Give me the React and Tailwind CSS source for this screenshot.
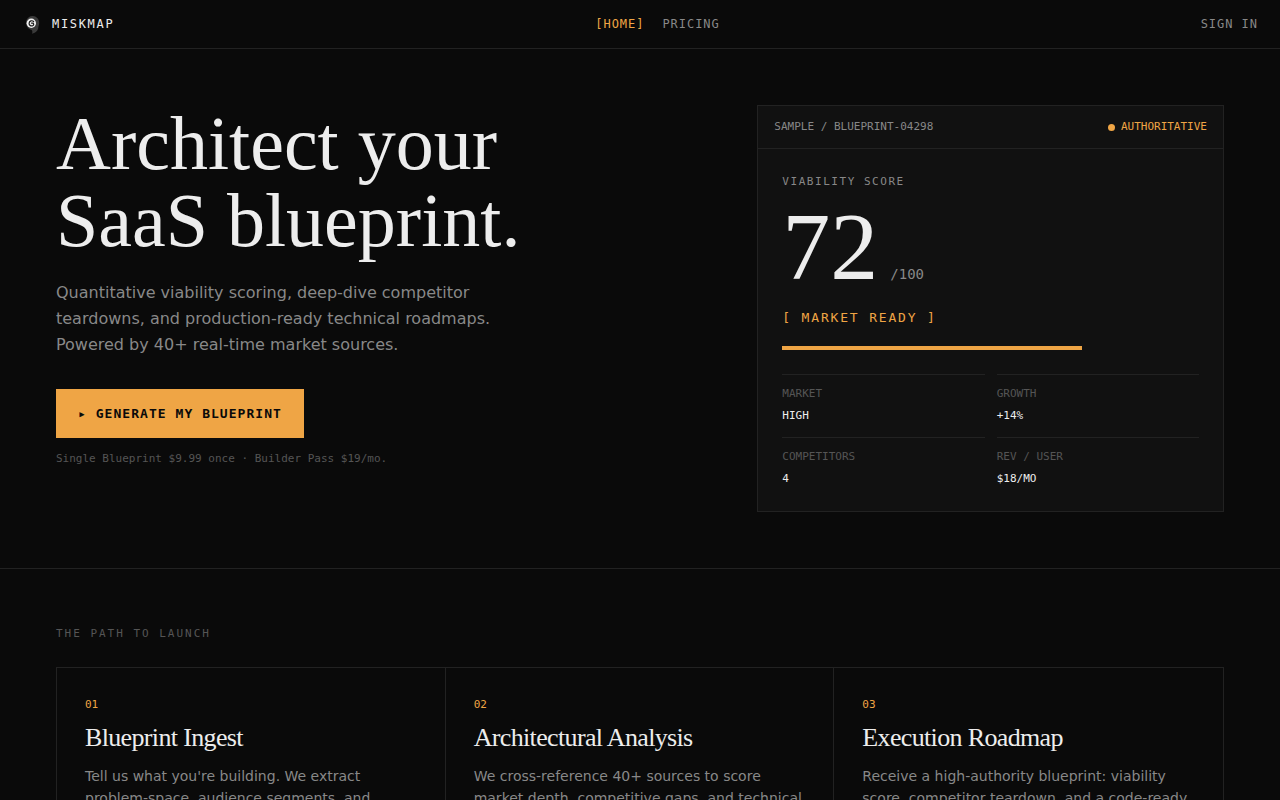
import React from 'react';

const NAV_LINKS = [
  { label: '[HOME]', href: '#home', active: true },
  { label: 'PRICING', href: '#pricing', active: false },
];

const STATS = [
  { label: 'MARKET', value: 'HIGH' },
  { label: 'GROWTH', value: '+14%' },
  { label: 'COMPETITORS', value: '4' },
  { label: 'REV / USER', value: '$18/MO' },
];

const STEPS = [
  {
    num: '01',
    title: 'Blueprint Ingest',
    text: "Tell us what you're building. We extract problem-space, audience segments, and",
  },
  {
    num: '02',
    title: 'Architectural Analysis',
    text: 'We cross-reference 40+ sources to score market depth, competitive gaps, and technical',
  },
  {
    num: '03',
    title: 'Execution Roadmap',
    text: 'Receive a high-authority blueprint: viability score, competitor teardown, and a code-ready',
  },
];

const SCORE = 72;

const Logo = () => (
  <svg viewBox="0 0 22 22" className="w-[22px] h-[22px]" aria-hidden="true">
    <path
      d="M4.200 8C5 4.800 7.600 2.800 10.800 2.900c3.600.1 6.300 3 6.400 6.700.1 2.500-1 4.100-1 5.900-.9 2.900-3.200 4.800-6.200 5.200.6-1.400.5-2.600-.4-3.700C5.800 16.200 3.400 12.400 4.200 8Z"
      fill="#3a3a3a"
    />
    <circle cx="9.300" cy="10.300" r="4.700" fill="#f2f2f2" />
    <path
      d="M11.600 8.500c-1.500-1.400-4.300-.7-4.500 1.700-.2 2.300 2.200 3.400 3.900 2.300 1.100-.8 1-2.400-.6-2.400h-.9"
      fill="none"
      stroke="#1a1a1a"
      strokeWidth="1.200"
      strokeLinecap="round"
    />
  </svg>
);

const Navbar = () => (
  <header className="border-b border-[#222222]">
    <nav className="h-12 px-[22px] flex items-center justify-between font-['DejaVu_Sans_Mono',monospace] text-xs">
      <a href="#home" className="flex items-center gap-2 tracking-[0.14em] text-[#ededed]">
        <Logo />
        MISKMAP
      </a>
      <div className="flex items-center gap-[18px] tracking-[0.08em]">
        {NAV_LINKS.map((link) => (
          <a
            key={link.label}
            href={link.href}
            className={link.active ? 'text-[#efa545]' : 'text-[#888888]'}
          >
            {link.label}
          </a>
        ))}
      </div>
      <a href="#sign-in" className="tracking-[0.08em] text-[#888888]">SIGN IN</a>
    </nav>
  </header>
);

const SampleCard = () => (
  <div className="bg-[#111111] border border-[#222222] font-['DejaVu_Sans_Mono',monospace] text-[11px] leading-[18px]">
    <div className="px-4 py-3 flex justify-between border-b border-[#222222]">
      <span className="text-[#888888]">SAMPLE / BLUEPRINT-04298</span>
      <span className="flex items-center gap-1.5 text-[#efa545]">
        <span className="w-[7px] h-[7px] rounded-full bg-[#efa545]" />
        AUTHORITATIVE
      </span>
    </div>

    <div className="px-6 pt-6 pb-[23px]">
      <div className="tracking-[0.14em] text-[#888888]">VIABILITY SCORE</div>
      <div className="mt-2 flex items-baseline gap-3">
        <span className="font-['Liberation_Serif',serif] text-[96px] leading-[96px] text-[#ededed]">{SCORE}</span>
        <span className="text-sm text-[#888888]">/100</span>
      </div>
      <div className="mt-3 text-[13px] leading-[21px] tracking-[0.14em] text-[#efa545]">[ MARKET READY ]</div>

      {/* Score bar */}
      <div className="mt-[18px] h-1">
        <div className="h-full bg-[#efa545]" style={{ width: `${SCORE}%` }} />
      </div>

      <dl className="mt-6 grid grid-cols-2 gap-3">
        {STATS.map((stat) => (
          <div key={stat.label} className="pt-2.5 border-t border-[#222222]">
            <dt className="text-[#555555]">{stat.label}</dt>
            <dd className="mt-1 text-[#ededed]">{stat.value}</dd>
          </div>
        ))}
      </dl>
    </div>
  </div>
);

const Hero = () => (
  <section className="p-14 grid grid-cols-[1.4fr_1fr] items-start gap-12 border-b border-[#222222]">
    <div>
      <h1 className="font-['Liberation_Serif',serif] text-[76px] leading-[77px] text-[#ededed]">
        Architect your
        <br />
        SaaS blueprint.
      </h1>
      <p className="mt-[21px] max-w-[480px] text-base leading-[26px] text-[#888888]">
        Quantitative viability scoring, deep-dive competitor teardowns, and production-ready technical
        roadmaps. Powered by 40+ real-time market sources.
      </p>
      <button
        type="button"
        className="mt-[31px] px-[22px] py-3.5 block bg-[#efa545] font-['DejaVu_Sans_Mono',monospace] text-[13px] leading-[21px] font-bold tracking-[0.08em] text-[#0a0a0a]"
      >
        ▸ GENERATE MY BLUEPRINT
      </button>
      <p className="mt-3 font-['DejaVu_Sans_Mono',monospace] text-[11px] leading-[18px] text-[#555555]">
        Single Blueprint $9.99 once · Builder Pass $19/mo.
      </p>
    </div>
    <SampleCard />
  </section>
);

const Path = () => (
  <section className="p-14">
    <h2 className="font-['DejaVu_Sans_Mono',monospace] text-[11px] leading-[18px] tracking-[0.18em] text-[#555555]">
      THE PATH TO LAUNCH
    </h2>
    <div className="mt-6 grid grid-cols-3 border border-[#222222] divide-x divide-[#222222]">
      {STEPS.map((step) => (
        <article key={step.num} className="p-7">
          <div className="font-['DejaVu_Sans_Mono',monospace] text-[11px] leading-[18px] text-[#efa545]">{step.num}</div>
          <h3 className="mt-2 font-['Liberation_Serif',serif] text-[26px] leading-[31px] tracking-tight text-[#ededed]">
            {step.title}
          </h3>
          <p className="mt-3 text-sm leading-[22px] text-[#888888]">{step.text}</p>
        </article>
      ))}
    </div>
  </section>
);

const App = () => (
  <div className="min-h-screen bg-[#0a0a0a] font-['DejaVu_Sans',sans-serif]">
    <Navbar />
    <main>
      <Hero />
      <Path />
    </main>
  </div>
);

export default App;
